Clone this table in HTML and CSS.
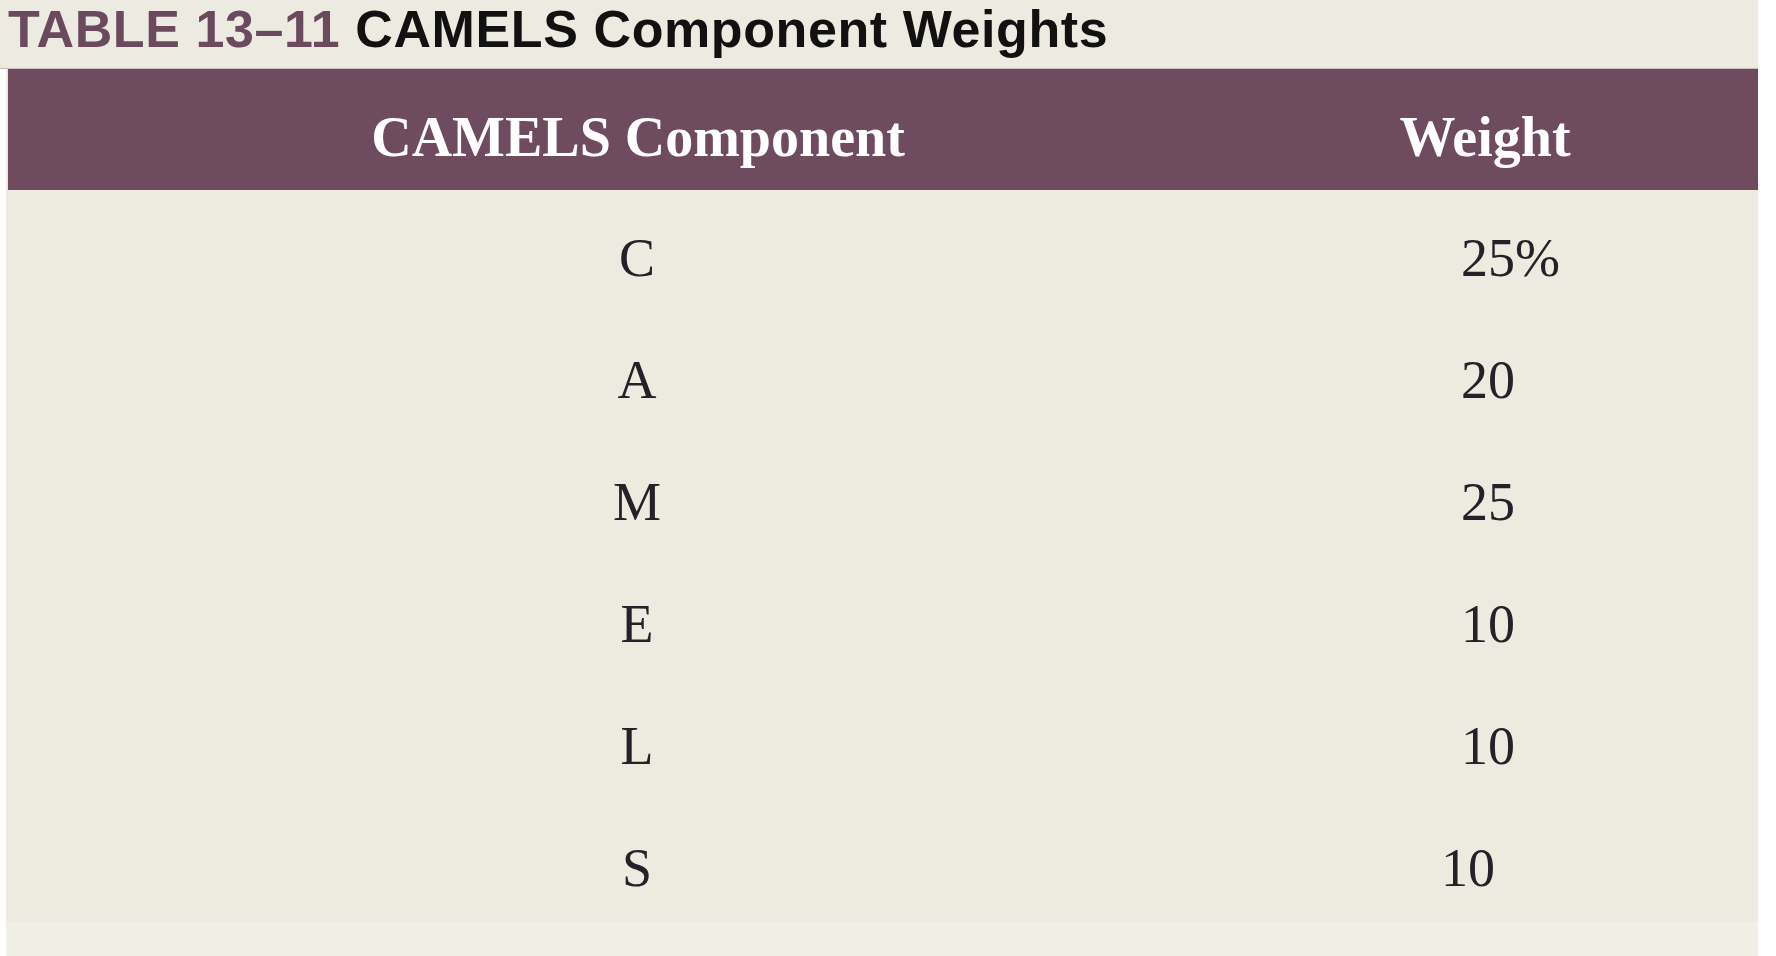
FILE: index.html
```html
<!DOCTYPE html>
<html>
<head>
<meta charset="utf-8">
<link rel="stylesheet" href="styles.css">
</head>
<body>
<div class="page">
  <h1 class="title"><span class="tnum">TABLE 13–11</span> CAMELS Component Weights</h1>
  <div class="table">
    <div class="head">
      <div class="hc comp">CAMELS Component</div>
      <div class="hc wt">Weight</div>
    </div>
    <div class="row"><div class="c">C</div><div class="w">25%</div></div>
    <div class="row"><div class="c">A</div><div class="w">20</div></div>
    <div class="row"><div class="c">M</div><div class="w">25</div></div>
    <div class="row"><div class="c">E</div><div class="w">10</div></div>
    <div class="row"><div class="c">L</div><div class="w">10</div></div>
    <div class="row"><div class="c">S</div><div class="w shift">10</div></div>
  </div>
  <div class="foot"></div>
</div>
</body>
</html>
```
FILE: styles.css
```css
html, body {
  margin: 0;
  padding: 0;
  background: #ffffff;
}
.page {
  width: 1758px;
}
.title {
  margin: 0;
  height: 69px;
  box-sizing: border-box;
  background: #edebe1;
  border-bottom: 1px solid #c8bfbd;
  font-family: "Liberation Sans", Arial, sans-serif;
  font-weight: 700;
  font-size: 52px;
  line-height: 58px;
  color: #111111;
  padding-left: 8px;
  white-space: nowrap;
  letter-spacing: 0.6px;
}
.tnum {
  color: #6b4a5d;
}
.table {
  margin-left: 6px;
  background: #edeadf;
}
.head {
  display: grid;
  grid-template-columns: 1262px 1fr;
  height: 121px;
  box-sizing: border-box;
  padding-top: 16px;
  margin-left: 2px;
  background: #6e4b5e;
  color: #ffffff;
  font-family: "Liberation Serif", serif;
  font-weight: 700;
  font-size: 56px;
  line-height: 105px;
}
.hc.comp {
  text-align: center;
  padding-right: 2px;
}
.hc.wt {
  text-align: center;
  padding-right: 58px;
}
.row {
  display: grid;
  grid-template-columns: 1262px 1fr;
  height: 122px;
  box-sizing: border-box;
  padding-top: 14px;
  font-family: "Liberation Serif", serif;
  font-size: 54px;
  line-height: 108px;
  color: #222228;
}
.c {
  text-align: center;
}
.w {
  padding-left: 193px;
}
.w.shift {
  padding-left: 173px;
}
.foot {
  margin-left: 6px;
  height: 34px;
  background: #f0efe6;
}
```
